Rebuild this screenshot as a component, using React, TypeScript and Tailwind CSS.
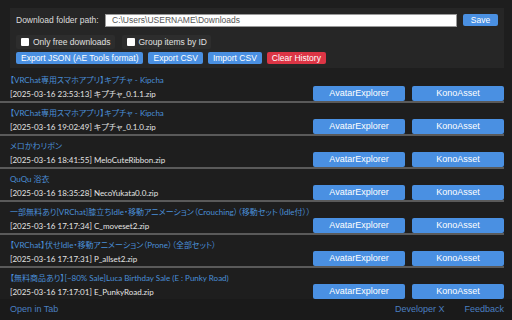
const items = [
  { title: '【VRChat専用スマホアプリ】キプチャ - Kipcha', file: '[2025-03-16 23:53:13] キプチャ_0.1.1.zip' },
  { title: '【VRChat専用スマホアプリ】キプチャ - Kipcha', file: '[2025-03-16 19:02:49] キプチャ_0.1.0.zip' },
  { title: 'メロかわリボン', file: '[2025-03-16 18:41:55] MeloCuteRibbon.zip' },
  { title: 'QuQu 浴衣', file: '[2025-03-16 18:35:28] NecoYukata0.0.zip' },
  {
    title: '一部無料あり[VRChat]膝立ちIdle・移動アニメーション（Crouching）（移動セット（Idle付））',
    file: '[2025-03-16 17:17:34] C_moveset2.zip',
  },
  { title: '【VRChat】伏せIdle・移動アニメーション（Prone）（全部セット）', file: '[2025-03-16 17:17:31] P_allset2.zip' },
  { title: '【無料商品あり】[~80% Sale]Luca Birthday Sale (E : Punky Road)', file: '[2025-03-16 17:17:01] E_PunkyRoad.zip' },
]

const sans = "font-['Liberation_Sans',Arial,sans-serif]"
const jp = "font-['Lato','Noto_Sans_CJK_JP',sans-serif] [font-feature-settings:'palt']"

const Btn = ({ label, red }: { label: string; red?: boolean }) => (
  <button
    className={`h-[12px] px-[5px] rounded-[2px] text-[8.5px] leading-[12px] text-white whitespace-nowrap ${
      red ? 'bg-[#dc3545]' : 'bg-[#4a90e2]'
    }`}
  >
    {label}
  </button>
)

const Check = ({ label }: { label: string }) => (
  <label className="flex items-center h-[14px] pl-[5px] pr-[4px] bg-[#2d2d2d] rounded-[2px] text-[8.5px] text-[#e0e0e0] whitespace-nowrap">
    <span className="w-[8px] h-[8px] bg-white rounded-[1px] mr-[4px]" />
    {label}
  </label>
)

export default function App() {
  return (
    <div className={`w-[512px] h-[320px] bg-[#1e1e1e] flex flex-col overflow-hidden ${sans}`}>
      <div className="mt-[8px] ml-[10px] mr-[8px] h-[60px] bg-[#262626] px-[6px] pt-[5px] flex flex-col">
        <div className="flex items-center h-[14px]">
          <span className="text-[8.5px] text-[#dddddd] w-[89px] shrink-0 whitespace-nowrap">Download folder path:</span>
          <div className="w-[352px] h-[13px] bg-white border border-[#999] px-[6px] text-[8.5px] leading-[11px] text-[#555] whitespace-nowrap">
            C:\Users\USERNAME\Downloads
          </div>
          <div className="ml-[6px] w-[35px] h-[12px] bg-[#4a90e2] rounded-[2px] text-white text-[8.5px] leading-[12px] text-center">
            Save
          </div>
        </div>
        <div className="flex gap-[7px] mt-[8px]">
          <Check label="Only free downloads" />
          <Check label="Group items by ID" />
        </div>
        <div className="flex gap-[5px] mt-[3px]">
          <Btn label="Export JSON (AE Tools format)" />
          <Btn label="Export CSV" />
          <Btn label="Import CSV" />
          <Btn label="Clear History" red />
        </div>
      </div>

      <div className={`mt-[2px] mr-[8px] flex-1 overflow-hidden ${jp}`}>
        {items.map((it, i) => (
          <div key={i} className="pt-[4px] pl-[10px] border-b-2 border-[#5a5a5a]">
            <div className="h-[12px] text-[8px] leading-[12px] text-[#4a8fd8] whitespace-nowrap">{it.title}</div>
            <div className="h-[15px] flex items-center">
              <span className="flex-1 text-[8px] text-[#e4e4e4] whitespace-nowrap">{it.file}</span>
              <div className={`flex gap-[7px] ${sans}`}>
                <div className="w-[92px] h-[15px] rounded-[2px] bg-[#4a90e2] text-white text-[9px] leading-[15px] text-center">
                  AvatarExplorer
                </div>
                <div className="w-[92px] h-[15px] rounded-[2px] bg-[#4a90e2] text-white text-[9px] leading-[15px] text-center">
                  KonoAsset
                </div>
              </div>
            </div>
          </div>
        ))}
      </div>

      <div className="h-[21px] shrink-0 bg-[#1a1a1a] flex items-center pl-[10px] pr-[8px] text-[9px] text-[#4a7fc0]">
        <span className="flex-1">Open in Tab</span>
        <span>Developer X</span>
        <span className="ml-[20px]">Feedback</span>
      </div>
    </div>
  )
}
